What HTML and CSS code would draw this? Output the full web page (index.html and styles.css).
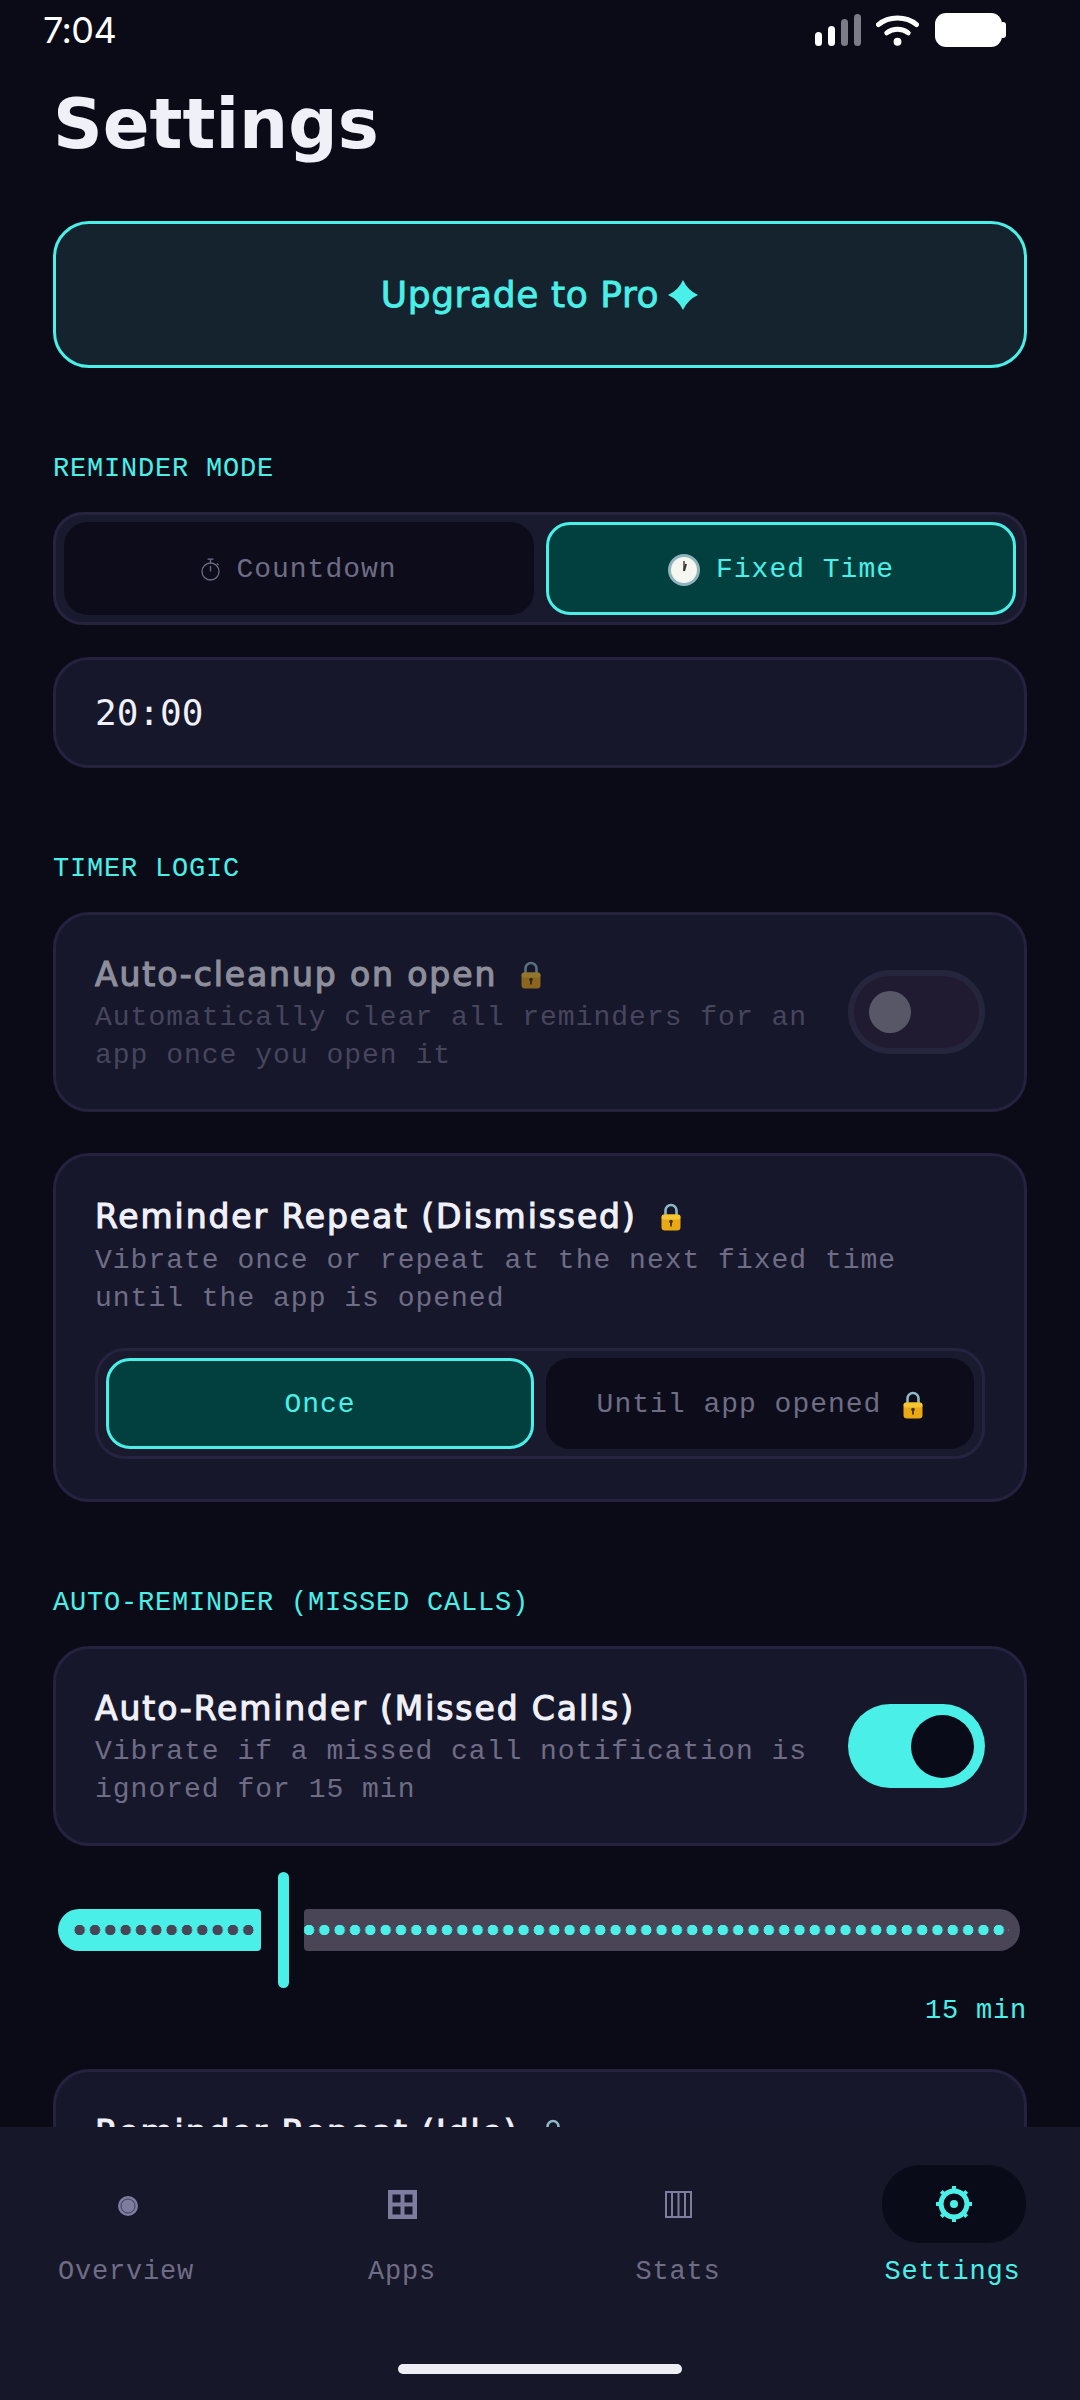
FILE: index.html
```html
<!DOCTYPE html>
<html lang="en">
<head>
    <meta charset="UTF-8">
    <meta name="viewport" content="width=device-width, initial-scale=1.0">
    <title>Settings</title>
    <link rel="stylesheet" href="styles.css">
</head>
<body>

<!-- shared lock emoji -->
<svg class="defs" width="0" height="0">
    <symbol id="lock" viewBox="0 0 20 28">
        <path d="M4.500 13V7.500a5.500 5.500 0 0 1 11 0V13" fill="none" stroke="#8fb9c4" stroke-width="2.600"/>
        <rect x="0.500" y="11.500" width="19" height="16" rx="3.500" fill="#eaa815"/>
        <rect x="0.500" y="11.500" width="19" height="5" rx="2.500" fill="#f6c533"/>
        <circle cx="10" cy="18.500" r="1.800" fill="#4a3208"/>
        <rect x="9.100" y="18.500" width="1.800" height="5" fill="#4a3208"/>
    </symbol>
</svg>

<div class="screen">
    <!-- status bar -->
    <div class="status-bar">
        <span class="time">7:04</span>
        <div class="status-icons">
            <svg class="signal" width="46" height="34" viewBox="0 0 46 34">
                <rect x="0" y="19" width="7" height="14" rx="3.500" fill="#fff"/>
                <rect x="13" y="13" width="7" height="20" rx="3.500" fill="#fff"/>
                <rect x="26" y="6" width="7" height="27" rx="3.500" fill="#7c7b86"/>
                <rect x="39" y="1" width="7" height="32" rx="3.500" fill="#7c7b86"/>
            </svg>
            <svg class="wifi" width="43" height="34" viewBox="0 0 44 34">
                <path d="M2.500 11.500C13 2.500 31 2.500 41.500 11.500" fill="none" stroke="#fff" stroke-width="5" stroke-linecap="round"/>
                <path d="M11 20c6.500-5 15.500-5 22 0" fill="none" stroke="#fff" stroke-width="5" stroke-linecap="round"/>
                <circle cx="22" cy="29" r="4" fill="#fff"/>
            </svg>
            <div class="battery"><span class="battery-nub"></span></div>
        </div>
    </div>

    <h1 class="page-title">Settings</h1>

    <button class="upgrade-btn">Upgrade to Pro
        <svg width="32" height="30" viewBox="0 0 32 32"><path d="M16 0Q21 11 32 16Q21 21 16 32Q11 21 0 16Q11 11 16 0Z" fill="#4af0e8"/></svg>
    </button>

    <!-- reminder mode -->
    <h2 class="section-label">REMINDER MODE</h2>
    <div class="segmented">
        <div class="segment">
            <svg class="seg-icon" width="19" height="23" viewBox="0 0 19 23">
                <g fill="none" stroke="#6f6c85" stroke-width="1.300">
                    <circle cx="9.500" cy="13.500" r="8.500"/>
                    <path d="M6.500 1.200h6M9.500 1.200V5M9.500 13.500V8M16 5.500l1.500 1.500"/>
                </g>
            </svg>
            Countdown
        </div>
        <div class="segment active">
            <svg class="seg-icon" width="32" height="32" viewBox="0 0 32 32">
                <circle cx="16" cy="16" r="16" fill="#8fb4bd"/>
                <circle cx="16" cy="16" r="13" fill="#f7f7f2"/>
                <path d="M16 17V7" stroke="#3a3230" stroke-width="1.400"/>
                <path d="M16 17l2-7" stroke="#3a3230" stroke-width="2"/>
            </svg>
            Fixed Time
        </div>
    </div>
    <div class="card time-card">20:00</div>

    <!-- timer logic -->
    <h2 class="section-label">TIMER LOGIC</h2>
    <div class="card row-card locked">
        <div class="card-text">
            <h3 class="card-title">Auto-cleanup on open <svg class="lock" width="20" height="28"><use href="#lock"/></svg></h3>
            <p class="card-desc">Automatically clear all reminders for an app once you open it</p>
        </div>
        <div class="toggle"><span class="knob"></span></div>
    </div>
    <div class="card repeat-card">
        <h3 class="card-title">Reminder Repeat (Dismissed) <svg class="lock" width="20" height="28"><use href="#lock"/></svg></h3>
        <p class="card-desc">Vibrate once or repeat at the next fixed time until the app is opened</p>
        <div class="segmented small">
            <div class="segment active">Once</div>
            <div class="segment">Until app opened <svg class="lock" width="20" height="28"><use href="#lock"/></svg></div>
        </div>
    </div>

    <!-- auto reminder -->
    <h2 class="section-label">AUTO-REMINDER (MISSED CALLS)</h2>
    <div class="card row-card">
        <div class="card-text">
            <h3 class="card-title">Auto-Reminder (Missed Calls)</h3>
            <p class="card-desc">Vibrate if a missed call notification is ignored for 15 min</p>
        </div>
        <div class="toggle on"><span class="knob"></span></div>
    </div>
    <div class="slider">
        <div class="track-done"><div class="dots"></div></div>
        <span class="handle"></span>
        <div class="track-rest"><div class="dots"></div></div>
    </div>
    <div class="slider-value">15 min</div>

    <div class="card repeat-card last">
        <h3 class="card-title">Reminder Repeat (Idle) <svg class="lock" width="20" height="28"><use href="#lock"/></svg></h3>
    </div>

    <!-- bottom nav -->
    <nav class="bottom-nav">
        <div class="nav-items">
            <div class="nav-item">
                <div class="nav-icon">
                    <svg class="overview-icon" width="20" height="20" viewBox="0 0 20 20"><circle cx="10" cy="10" r="10" fill="#7f7d9f"/><circle cx="10" cy="10" r="7" fill="#7f7d9f" stroke="#3e3d5a" stroke-width="1"/></svg>
                </div>
                <span>Overview</span>
            </div>
            <div class="nav-item">
                <div class="nav-icon">
                    <svg width="29" height="29" viewBox="0 0 29 29"><rect width="29" height="29" fill="#7f7d9f"/><rect x="4.500" y="4.500" width="8" height="8" fill="#161729"/><rect x="16.500" y="4.500" width="8" height="8" fill="#161729"/><rect x="4.500" y="16.500" width="8" height="8" fill="#161729"/><rect x="16.500" y="16.500" width="8" height="8" fill="#161729"/></svg>
                </div>
                <span>Apps</span>
            </div>
            <div class="nav-item">
                <div class="nav-icon">
                    <svg width="27" height="27" viewBox="0 0 27 27"><rect x="1" y="1" width="25" height="25" fill="none" stroke="#7f7d9f" stroke-width="2"/><path d="M7 1v25M13.500 1v25M20 1v25" stroke="#7f7d9f" stroke-width="2"/></svg>
                </div>
                <span>Stats</span>
            </div>
            <div class="nav-item active">
                <div class="nav-icon">
                    <svg width="38" height="38" viewBox="0 0 38 38">
                        <circle cx="19" cy="19" r="13" fill="none" stroke="#4af0e8" stroke-width="5"/>
                        <circle cx="19" cy="19" r="4" fill="#4af0e8"/>
                        <path d="M19 1v6M19 31v6M1 19h6M31 19h6M6.300 6.300l4 4M27.700 27.700l4 4M6.300 31.700l4-4M27.700 10.300l4-4" stroke="#4af0e8" stroke-width="4"/>
                    </svg>
                </div>
                <span>Settings</span>
            </div>
        </div>
        <div class="home-bar"></div>
    </nav>
</div>

</body>
</html>
```

FILE: styles.css
```css
/* page */
* {
    box-sizing: border-box;
}
body {
    margin: 0;
    background-color: #0b0b18;
    font-family: "Liberation Mono", monospace;
}
.defs {
    position: absolute;
}
.screen {
    position: relative;
    width: 1080px;
    height: 2400px;
    padding: 0 53px;
    overflow: hidden;
    background-color: #0b0b18;
}

/* status bar */
.status-bar {
    display: flex;
    justify-content: space-between;
    align-items: center;
    height: 60px;
    margin: 0 -53px;
    padding: 0 78px 0 43px;
}
.time {
    font-family: "Inter", sans-serif;
    font-size: 36px;
    letter-spacing: -0.600px;
    color: #fff;
}
.status-icons {
    display: flex;
    align-items: center;
    gap: 15px;
}
.battery {
    position: relative;
    width: 67px;
    height: 34px;
    margin-left: 1px;
    border-radius: 11px;
    background-color: #fff;
}
.battery-nub {
    position: absolute;
    left: 67px;
    top: 9px;
    width: 4px;
    height: 16px;
    border-radius: 0 3px 3px 0;
    background-color: #fff;
}

/* heading */
.page-title {
    margin: 20px 0 0;
    font-family: "DejaVu Sans", sans-serif;
    font-size: 69px;
    line-height: 88px;
    font-weight: 700;
    color: #f0f0f8;
}
.upgrade-btn {
    display: flex;
    justify-content: center;
    align-items: center;
    gap: 8px;
    width: 100%;
    height: 147px;
    margin-top: 53px;
    border: 3px solid #4af0e8;
    border-radius: 36px;
    background-color: #15232e;
    font-family: "DejaVu Sans", sans-serif;
    font-size: 36px;
    letter-spacing: 0.600px;
    -webkit-text-stroke: 0.800px #4af0e8;
    color: #4af0e8;
}

/* sections */
.section-label {
    margin: 86px 0 28px;
    font-size: 27px;
    line-height: 30px;
    font-weight: 400;
    letter-spacing: 0.800px;
    color: #4af0e8;
}

/* segmented control */
.segmented {
    display: flex;
    gap: 12px;
    height: 113px;
    padding: 7px 8px;
    border: 3px solid #252340;
    border-radius: 30px;
    background-color: #191a2e;
}
.segment {
    display: flex;
    justify-content: center;
    align-items: center;
    flex: 1;
    gap: 16px;
    padding-top: 2px;
    border: 3px solid #0c0c1a;
    border-radius: 24px;
    background-color: #0c0c1a;
    font-size: 28px;
    letter-spacing: 1px;
    color: #6f6c85;
}
.segment.active {
    border-color: #4af0e8;
    background-color: #023f3f;
    color: #4af0e8;
}
.seg-icon {
    flex: none;
}
.segmented.small {
    height: 111px;
    margin-top: 30px;
}
.segmented.small .segment {
    gap: 22px;
}

/* cards */
.card {
    margin-top: 41px;
    border: 3px solid #24223f;
    border-radius: 36px;
    background-color: #16172b;
}
.section-label + .card {
    margin-top: 0;
}
.time-card {
    height: 111px;
    margin-top: 32px;
    padding: 0 39px;
    font-family: "DejaVu Sans Mono", monospace;
    font-size: 36px;
    line-height: 105px;
    color: #f0f0f8;
}
.row-card {
    display: flex;
    justify-content: space-between;
    align-items: center;
    height: 200px;
    padding: 0 39px;
}
.card-text {
    width: 720px;
    padding-top: 4px;
}
.repeat-card {
    height: 349px;
    padding: 40px 39px;
}
.card-title {
    display: flex;
    align-items: center;
    gap: 24px;
    margin: 0;
    font-family: "DejaVu Sans", sans-serif;
    font-size: 33px;
    line-height: 42px;
    font-weight: 400;
    letter-spacing: 1.900px;
    -webkit-text-stroke: 1.100px #f0f0f8;
    color: #f0f0f8;
}
.card-desc {
    margin: 3px 0 0;
    font-size: 28px;
    line-height: 38px;
    letter-spacing: 1px;
    color: #6f6c85;
}
.repeat-card .card-desc {
    margin-top: 4px;
}
.lock {
    flex: none;
}
.locked .card-text,
.locked .toggle {
    opacity: 0.55;
}

/* toggle */
.toggle {
    display: flex;
    align-items: center;
    flex: none;
    width: 137px;
    height: 84px;
    padding: 0 15px;
    border: 6px solid #33314d;
    border-radius: 42px;
    background-color: #2a2038;
}
.knob {
    width: 42px;
    height: 42px;
    border-radius: 50%;
    background-color: #8e8d9b;
}
.toggle.on {
    justify-content: flex-end;
    padding: 0 11px;
    border: none;
    background-color: #4af0e8;
}
.toggle.on .knob {
    width: 63px;
    height: 63px;
    background-color: #0a0b18;
}

/* slider */
.slider {
    display: flex;
    align-items: center;
    height: 116px;
    margin-top: 26px;
    padding: 0 7px 0 5px;
}
.track-done,
.track-rest {
    height: 42px;
}
.track-done {
    width: 203px;
    padding: 0 5.500px 0 13.500px;
    border-radius: 21px 4px 4px 21px;
    background-color: #4af0e8;
}
.track-rest {
    flex: 1;
    padding-right: 11.400px;
    border-radius: 4px 21px 21px 4px;
    background-color: #4a4556;
}
.dots {
    height: 100%;
    background-size: 15.330px 42px;
}
.track-done .dots {
    background-image: radial-gradient(circle at center, #4a4556 5px, transparent 5.500px);
}
.track-rest .dots {
    background-image: radial-gradient(circle at center, #4af0e8 5px, transparent 5.500px);
    background-position: -2.670px 0;
}
.handle {
    width: 11px;
    height: 116px;
    margin: 0 15px 0 17px;
    border-radius: 6px;
    background-color: #4af0e8;
}
.slider-value {
    margin-top: 8px;
    font-size: 27px;
    line-height: 30px;
    letter-spacing: 0.800px;
    text-align: right;
    color: #4af0e8;
}
.repeat-card.last {
    margin-top: 43px;
}

/* bottom nav */
.bottom-nav {
    position: absolute;
    left: 0;
    bottom: 0;
    width: 1080px;
    height: 273px;
    padding: 38px 54px 0;
    background-color: #161729;
}
.nav-items {
    display: flex;
    justify-content: space-between;
}
.nav-item {
    display: flex;
    flex-direction: column;
    align-items: center;
    gap: 11px;
    width: 144px;
    font-size: 27px;
    line-height: 36px;
    letter-spacing: 0.800px;
    color: #6f6c85;
}
.nav-icon {
    display: flex;
    justify-content: center;
    align-items: center;
    width: 144px;
    height: 78px;
    border-radius: 38px;
}
.overview-icon {
    margin: 4px 0 0 3px;
}
.nav-item.active {
    color: #4af0e8;
}
.nav-item.active span {
    margin-right: 3px;
}
.nav-item.active .nav-icon {
    background-color: #0a0b18;
}
.home-bar {
    position: absolute;
    left: 398px;
    bottom: 26px;
    width: 284px;
    height: 10px;
    border-radius: 5px;
    background-color: #eeeef5;
}
```
